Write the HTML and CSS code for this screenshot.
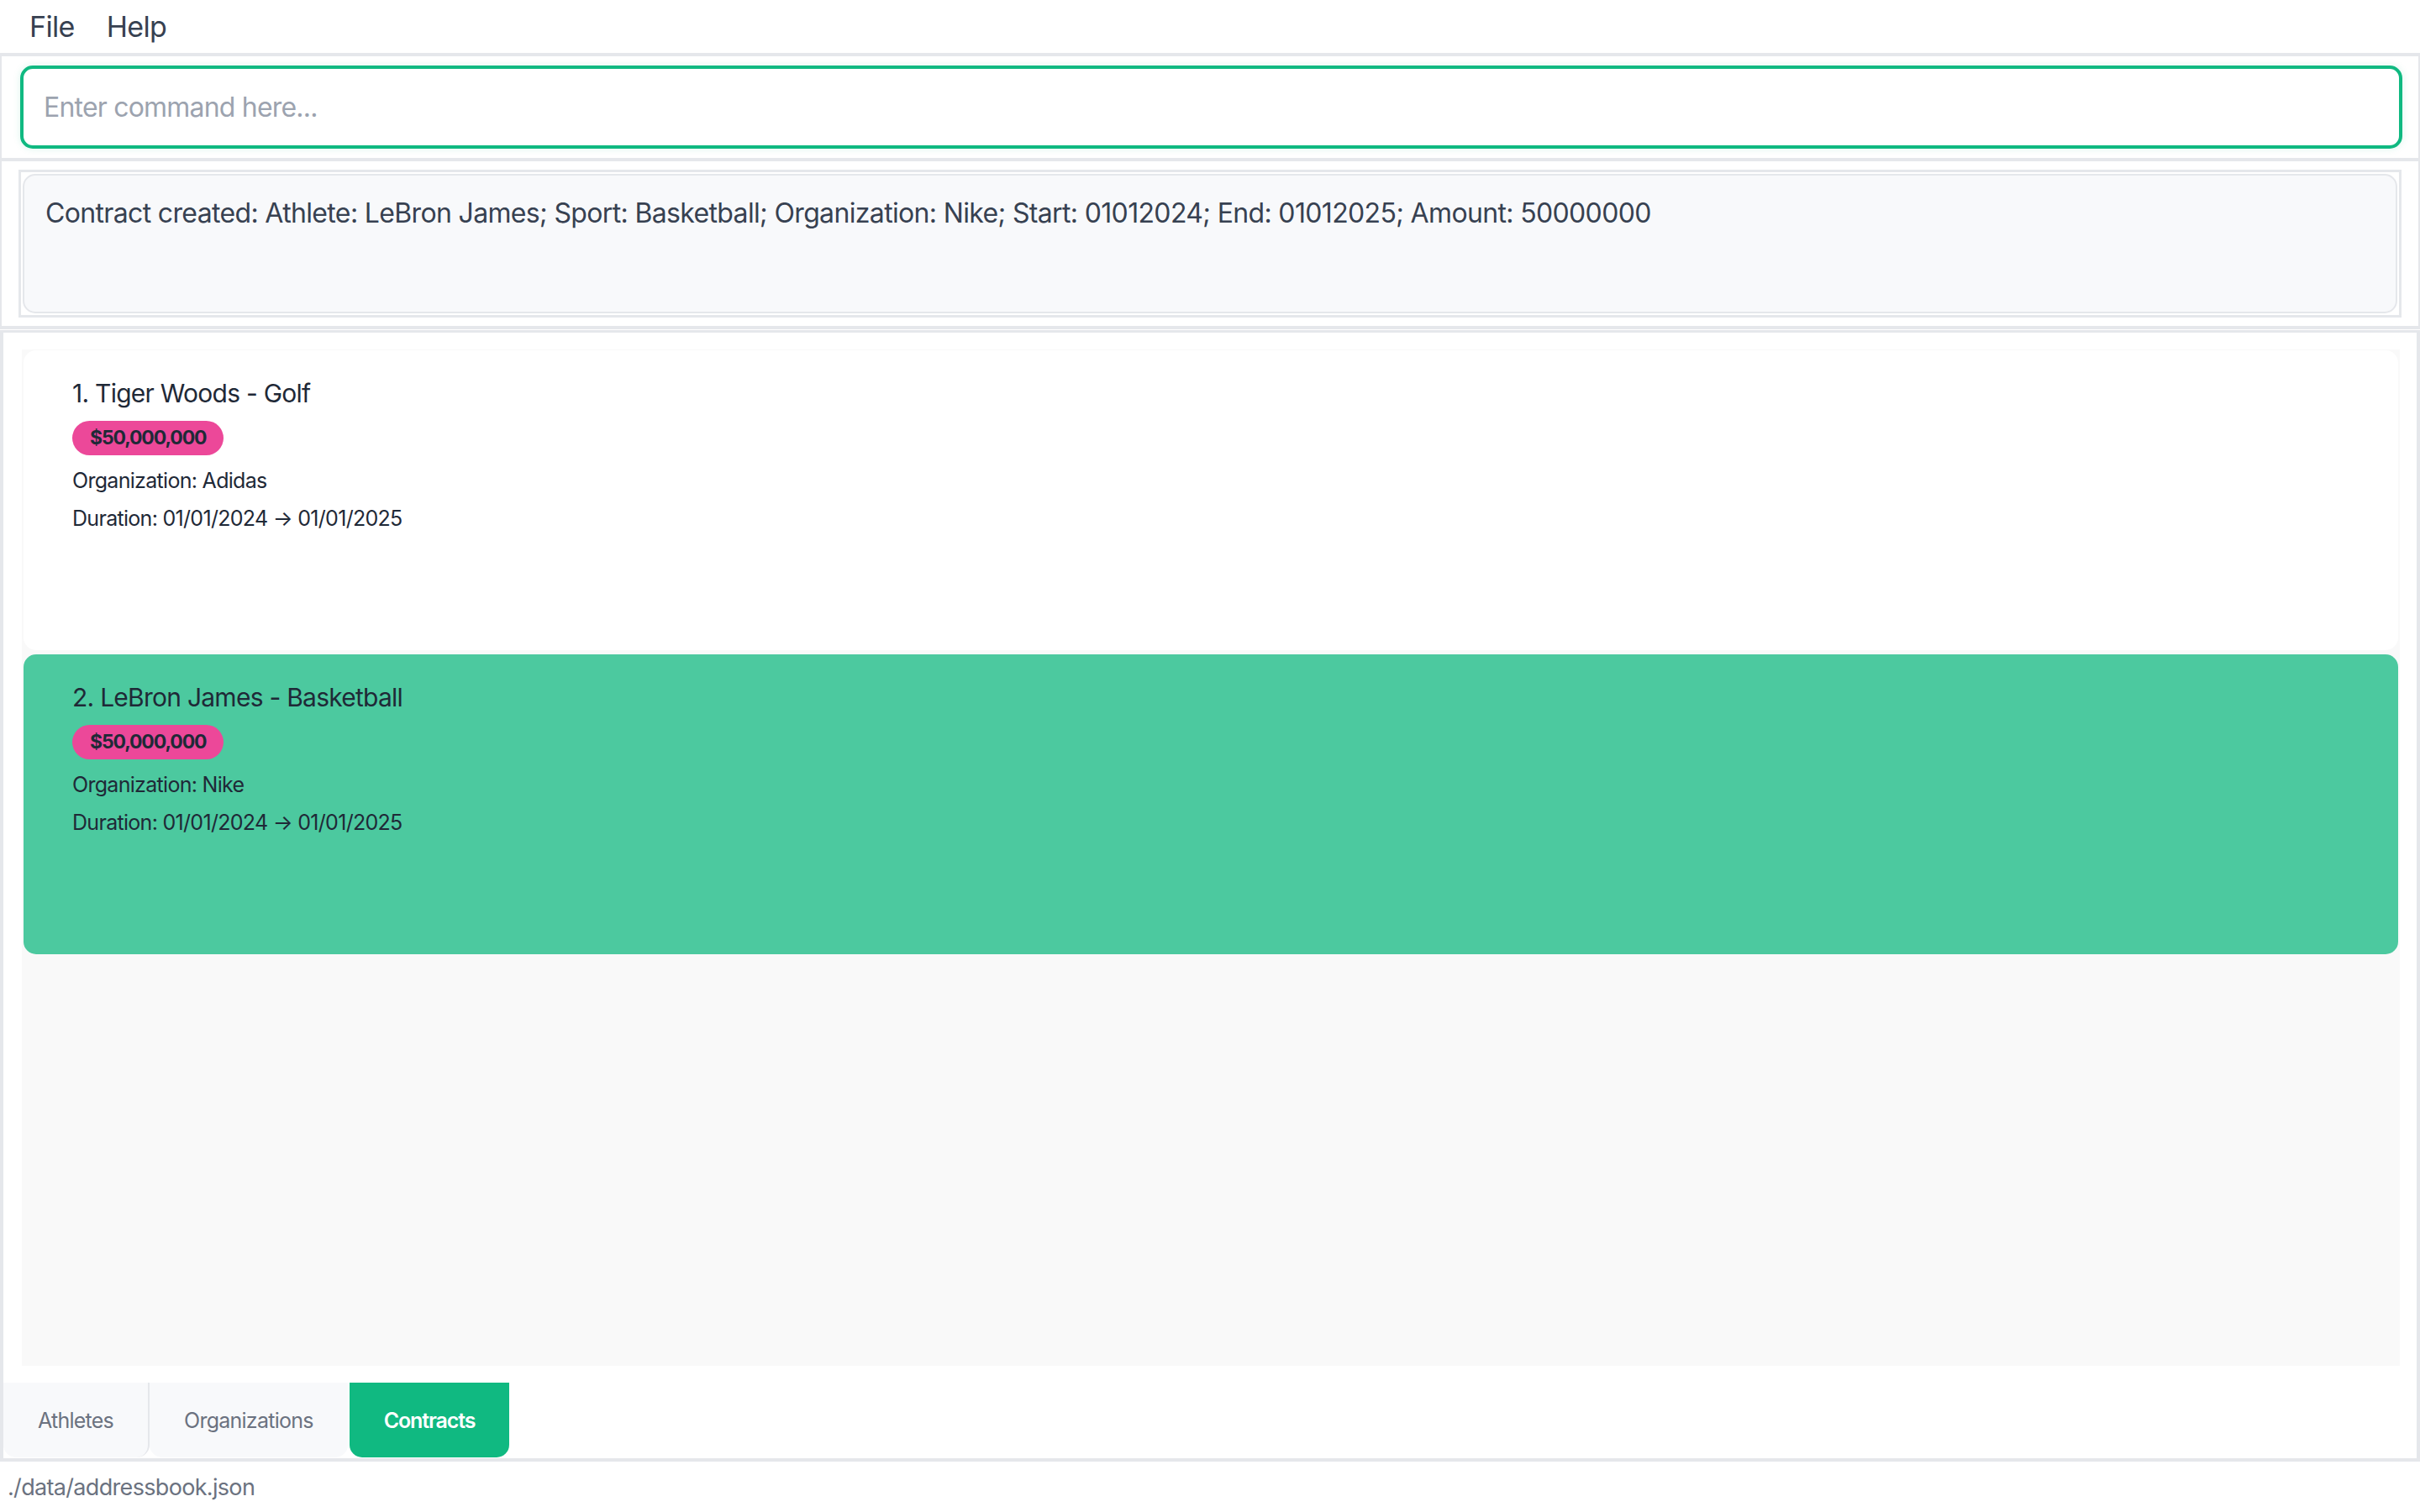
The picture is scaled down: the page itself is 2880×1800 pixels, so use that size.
FILE: index.html
```html
<!DOCTYPE html>
<html>
    <head>
        <title>Contracts</title>
        <meta charset="utf-8">
        <link rel="stylesheet" href="styles.css">
    </head>
    <body>
        <div class="menuBar">
            <span class="menuItem">File</span>
            <span class="menuItem">Help</span>
        </div>
        <div class="commandPanel">
            <input class="commandBox" type="text" placeholder="Enter command here...">
        </div>
        <div class="resultPanel">
            <div class="resultOuter">
                <div class="resultBox">Contract created: Athlete: LeBron James; Sport: Basketball; Organization: Nike; Start: 01012024; End: 01012025; Amount: 50000000</div>
            </div>
        </div>
        <div class="listPanel">
            <div class="listView">
                <div class="card">
                    <div class="cardTitle">1. Tiger Woods - Golf</div>
                    <span class="badge">$50,000,000</span>
                    <div class="cardLine">Organization: Adidas</div>
                    <div class="cardLine">Duration: 01/01/2024 &#8594; 01/01/2025</div>
                </div>
                <div class="card selected">
                    <div class="cardTitle">2. LeBron James - Basketball</div>
                    <span class="badge">$50,000,000</span>
                    <div class="cardLine">Organization: Nike</div>
                    <div class="cardLine">Duration: 01/01/2024 &#8594; 01/01/2025</div>
                </div>
            </div>
            <div class="tabBar">
                <div class="tab">Athletes</div>
                <div class="tab">Organizations</div>
                <div class="tab active">Contracts</div>
            </div>
        </div>
        <div class="statusBar">./data/addressbook.json</div>
    </body>
</html>
```

FILE: styles.css
```css
body {
    margin: 0;
    height: 1800px;
    display: flex;
    flex-direction: column;
    font-family: Inter, "Noto Sans", sans-serif;
    letter-spacing: -0.03em;
    color: #374151;
    background: white;
}
.menuBar {
    height: 63px;
    display: flex;
    align-items: center;
    padding-left: 16px;
    border-bottom: 4px solid #e5e7eb;
}
.menuItem {
    font-size: 34px;
    letter-spacing: -0.02em;
    padding: 0 19px;
}
.commandPanel {
    padding: 11px 19px 11px 22px;
    border-left: 2px solid #e5e7eb;
    border-right: 2px solid #e5e7eb;
    border-bottom: 4px solid #e5e7eb;
}
.commandBox {
    box-sizing: border-box;
    width: 100%;
    height: 99px;
    border: 4px solid #10b981;
    border-radius: 15px;
    padding: 0 24px;
    font-family: Inter, "Noto Sans", sans-serif;
    font-size: 32px;
    letter-spacing: -0.025em;
    color: #374151;
    box-shadow: 0 0 8px rgba(16, 185, 129, 0.15);
    outline: none;
}
.commandBox::placeholder {
    color: #9ca3af;
}
.resultPanel {
    padding: 10px 20px 10px 20px;
    border-left: 2px solid #e5e7eb;
    border-right: 2px solid #e5e7eb;
    border-bottom: 4px solid #e5e7eb;
}
.resultOuter {
    border: 3px solid #e5e7eb;
    padding: 2px;
}
.resultBox {
    box-sizing: border-box;
    height: 166px;
    background: #f8f9fb;
    border: 2px solid #e5e7eb;
    border-radius: 15px;
    padding: 25px 25px;
    font-size: 32px;
    line-height: 40px;
    letter-spacing: -0.65px;
}
.listPanel {
    flex: 1;
    display: flex;
    flex-direction: column;
    border-top: 3px solid #e5e7eb;
    border-left: 4px solid #e5e7eb;
    border-right: 4px solid #e5e7eb;
    border-bottom: 4px solid #e5e7eb;
    margin-top: 1px;
}
.listView {
    height: 1208px;
    margin: 20px 20px 0 22px;
    padding: 1px 2px;
    background: #f9f9f9;
}
.card {
    box-sizing: border-box;
    height: 357px;
    margin-bottom: 5px;
    padding: 33px 58px;
    border-radius: 15px;
    background: #ffffff;
    color: #1f2937;
}
.card.selected {
    background: #4cc99f;
}
.cardTitle {
    font-size: 30px;
    line-height: 36px;
    margin-bottom: 15px;
    letter-spacing: -0.025em;
}
.badge {
    display: inline-block;
    height: 41px;
    line-height: 41px;
    padding: 0 21px;
    border-radius: 21px;
    background: #ec4899;
    font-size: 23px;
    font-weight: 700;
    letter-spacing: -0.05em;
    color: #1f2937;
}
.cardLine {
    font-size: 25px;
    line-height: 30px;
    margin-top: 15px;
    letter-spacing: -0.028em;
}
.tabBar {
    display: flex;
    margin-top: 20px;
    height: 89px;
}
.tab {
    display: flex;
    align-items: center;
    padding: 0 41px;
    font-size: 25px;
    letter-spacing: -0.03em;
    color: #6b7280;
    background: #f8f9fb;
    border-radius: 0 0 15px 15px;
    margin-right: 2px;
}
.tab:first-child {
    border-right: 2px solid #e5e7eb;
    margin-right: 0;
}
.tab.active {
    background: #10b981;
    color: white;
    font-weight: 600;
    letter-spacing: -0.045em;
}
.statusBar {
    height: 60px;
    display: flex;
    align-items: center;
    padding-left: 9px;
    font-size: 27px;
    letter-spacing: -0.025em;
    color: #6b7280;
}
```
